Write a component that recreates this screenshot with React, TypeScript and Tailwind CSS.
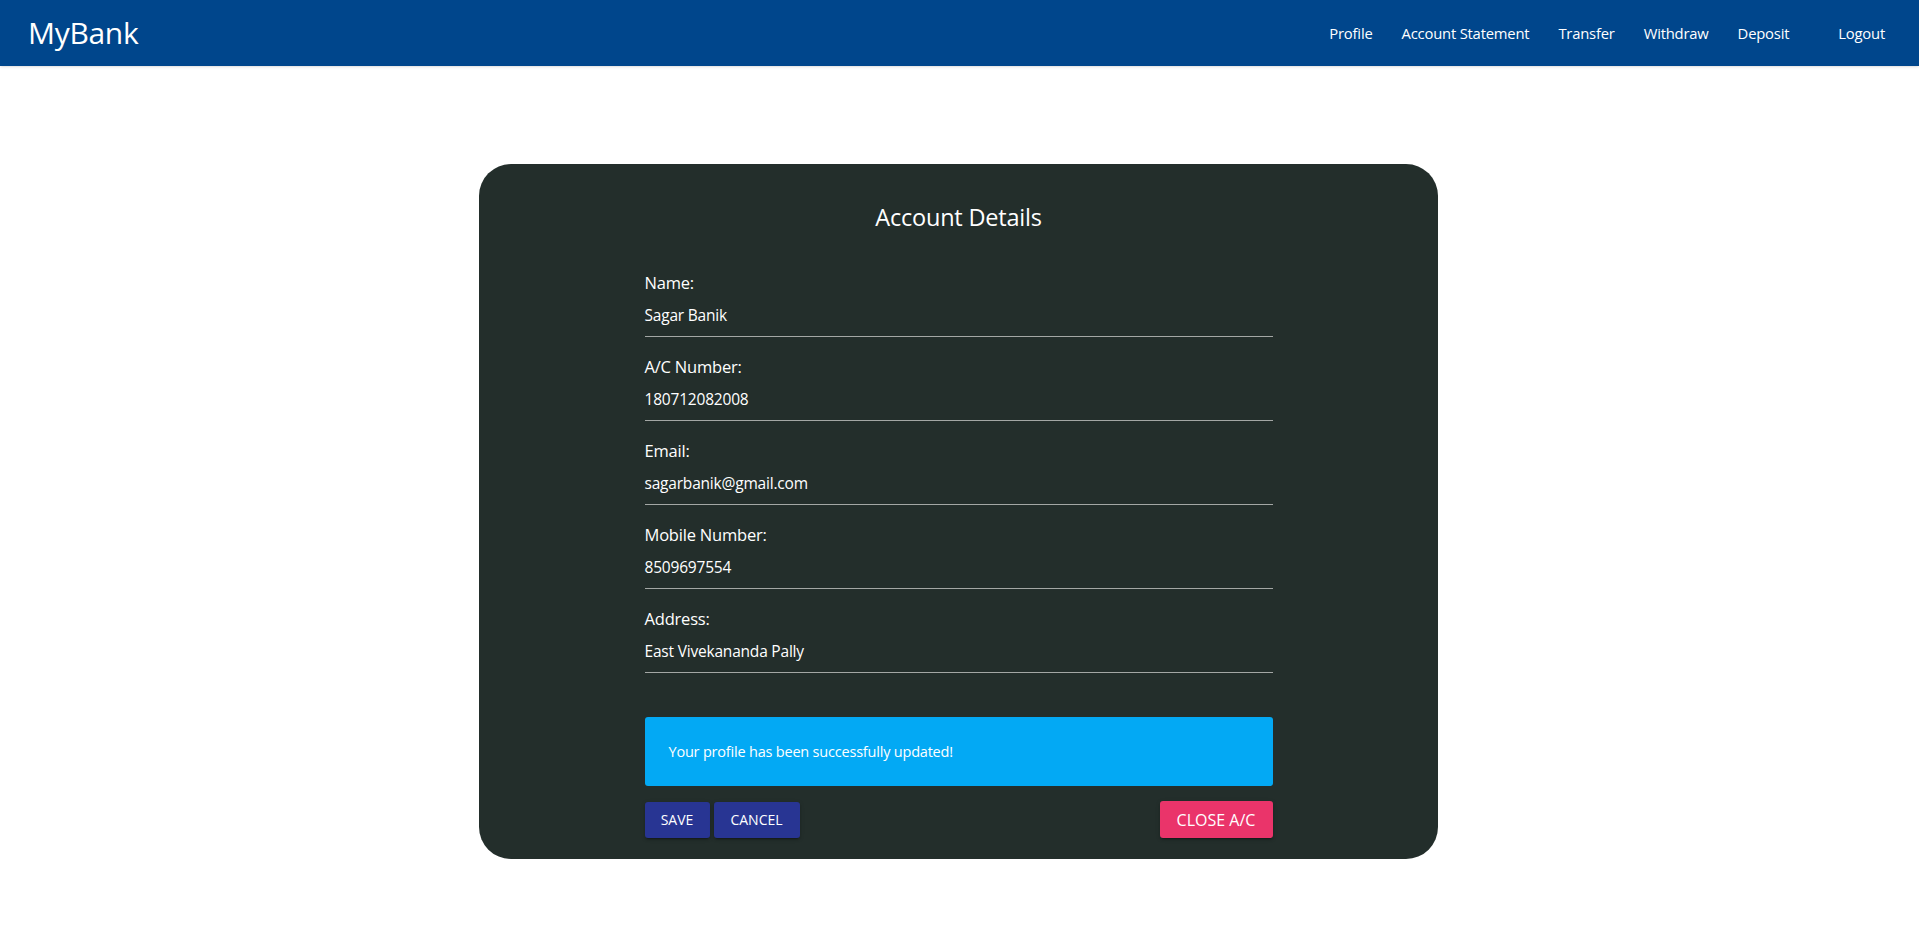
const FIELDS = [
  { label: 'Name:', value: 'Sagar Banik' },
  { label: 'A/C Number:', value: '180712082008' },
  { label: 'Email:', value: 'sagarbanik@gmail.com' },
  { label: 'Mobile Number:', value: '8509697554' },
  { label: 'Address:', value: 'East Vivekananda Pally' },
]

const NAV = ['Profile', 'Account Statement', 'Transfer', 'Withdraw', 'Deposit']

function Navbar() {
  return (
    <header className="h-[66px] bg-[#00468c] flex items-center justify-between pl-[28px] pr-[34px] text-white shadow-sm">
      <span className="text-[30px] leading-none tracking-[-0.3px]">MyBank</span>
      <nav className="flex items-center text-[14.8px]">
        {NAV.map((n) => (
          <a key={n} className="mr-[29px] tracking-[-0.2px]">{n}</a>
        ))}
        <a className="ml-[20px] tracking-[-0.2px]">Logout</a>
      </nav>
    </header>
  )
}

export default function App() {
  return (
    <div className="min-h-[937px] bg-white" style={{ fontFamily: '"Segoe UI", "Open Sans", "Noto Sans", sans-serif' }}>
      <Navbar />
      <main className="pt-[98px] flex justify-center">
        <div className="w-[959px] -translate-x-px bg-[#232e2b] rounded-[32px] pt-[37px] pb-[21px] text-white">
          <h1 className="text-center text-[23.5px] leading-8 tracking-[-0.2px]">Account Details</h1>
          <div className="w-[628px] mx-auto mt-[38px]">
            {FIELDS.map((f, i) => (
              <div key={f.label} className={`border-b border-[#a3a7a5] pb-[10px] ${i > 0 ? 'mt-[18px]' : ''}`}>
                <p className="text-[16.5px] leading-6 tracking-[-0.2px]">{f.label}</p>
                <p className="mt-[9px] text-[15.5px] leading-[22px] tracking-[-0.2px]">{f.value}</p>
              </div>
            ))}
            <div className="mt-[44px] h-[69px] bg-[#03a9f4] rounded-[3px] flex items-center px-[24px] text-[14.5px] tracking-[-0.2px]">
              Your profile has been successfully updated!
            </div>
            <div className="mt-[15px] flex items-center">
              <button className="h-[36px] w-[65px] bg-[#283593] rounded-[3px] text-[14px] uppercase shadow-[0_3px_1px_-2px_rgba(0,0,0,0.2),0_2px_2px_0_rgba(0,0,0,0.14),0_1px_5px_0_rgba(0,0,0,0.12)]">Save</button>
              <button className="ml-[4px] h-[36px] w-[86px] bg-[#283593] rounded-[3px] text-[14px] uppercase shadow-[0_3px_1px_-2px_rgba(0,0,0,0.2),0_2px_2px_0_rgba(0,0,0,0.14),0_1px_5px_0_rgba(0,0,0,0.12)]">Cancel</button>
              <button className="ml-auto h-[37px] w-[113px] bg-[#ea346a] rounded-[3px] text-[16px] uppercase shadow-[0_3px_1px_-2px_rgba(0,0,0,0.2),0_2px_2px_0_rgba(0,0,0,0.14),0_1px_5px_0_rgba(0,0,0,0.12)]">Close A/C</button>
            </div>
          </div>
        </div>
      </main>
    </div>
  )
}
